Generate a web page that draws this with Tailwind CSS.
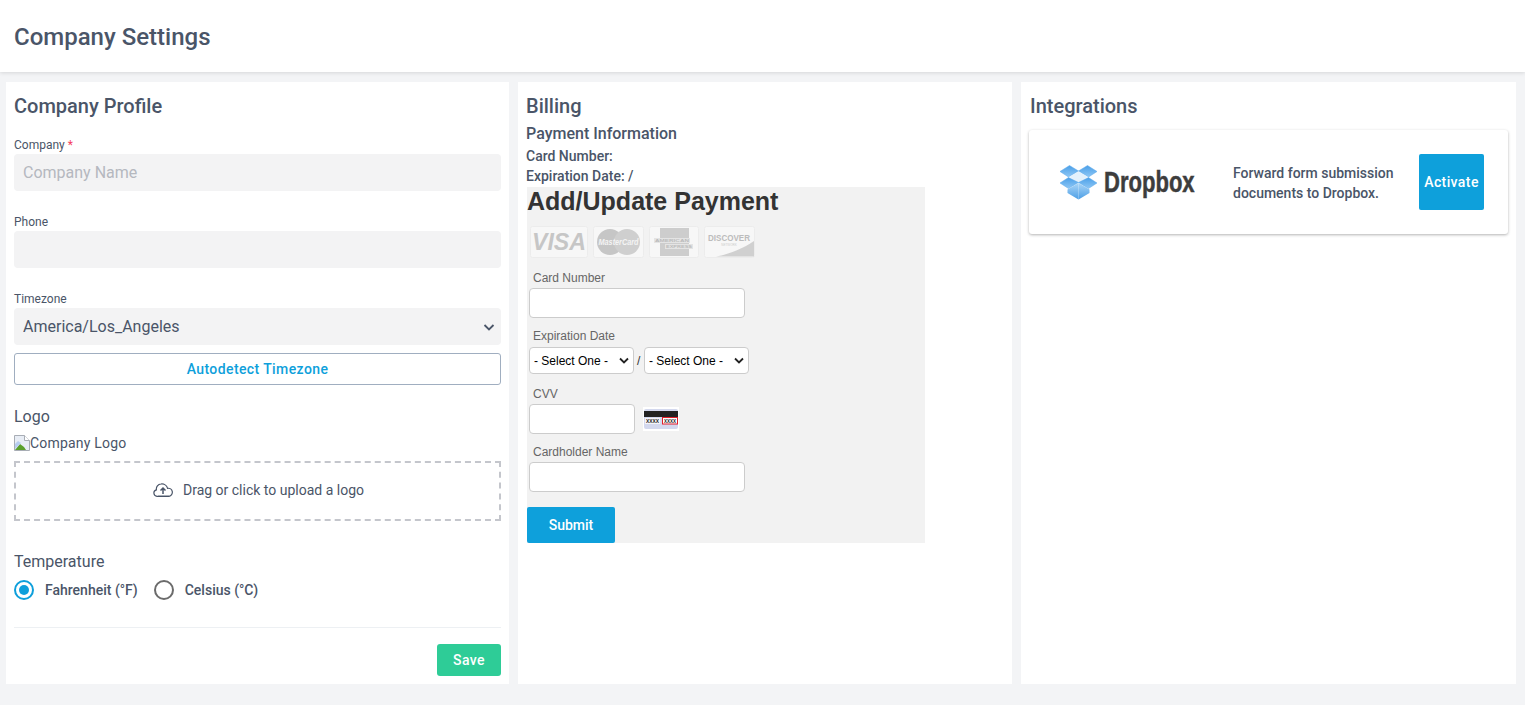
<!DOCTYPE html>
<html lang="en">
<head>
  <meta charset="UTF-8" />
  <title>Company Settings</title>
  <script src="https://cdn.jsdelivr.net/npm/@tailwindcss/browser@4"></script>
</head>
<body class="bg-[#f3f4f6] h-[705px] overflow-hidden font-['Roboto',sans-serif] text-[#4a5568]">
  <header class="bg-white h-[72px] px-[14px] pt-[2px] flex items-center shadow-[0_1px_4px_rgba(0,0,0,0.12)] relative">
    <h1 class="text-2xl font-medium">Company Settings</h1>
  </header>

  <main class="flex gap-[9px] pl-[6px] pt-[10px]">
    <!-- company profile -->
    <section class="bg-white w-[503px] h-[602px] pl-2 pr-2 pt-[11px]">
      <h2 class="text-xl leading-[26px] font-medium">Company Profile</h2>
      <form>
        <label class="block text-xs leading-[14px] mt-[19px] mb-[2px]">Company <span class="text-[#f43f5e]">*</span></label>
        <input type="text" placeholder="Company Name" class="block w-full h-[37px] px-[9px] rounded bg-[#f3f3f4] text-base placeholder:text-[#b5b8bf]" />
        <label class="block text-xs leading-[14px] mt-[24px] mb-[2px]">Phone</label>
        <input type="text" class="block w-full h-[37px] px-[9px] rounded bg-[#f3f3f4] text-base" />
        <label class="block text-xs leading-[14px] mt-[24px] mb-[2px]">Timezone</label>
        <div class="relative">
          <select class="block w-full h-[37px] px-[9px] rounded bg-[#f3f3f4] text-base appearance-none">
            <option>America/Los_Angeles</option>
          </select>
          <svg class="absolute right-[6px] top-[13px] w-3 h-3" viewBox="0 0 12 12" fill="none" stroke="#4a5568" stroke-width="1.8"><path d="M1.5 4l4.5 4.5L10.5 4" /></svg>
        </div>
        <button type="button" class="block w-full h-8 mt-2 rounded-[3px] border border-[#a0aec0] text-[#0e9fdb] text-sm font-medium tracking-[0.4px]">Autodetect Timezone</button>

        <div class="text-base leading-5 mt-[22px]">Logo</div>
        <div class="flex items-center h-4 mt-[8px] text-sm tracking-[0.2px]">
          <svg class="w-4 h-4 shrink-0" viewBox="0 0 16 16"><path d="M0.5 0.5h10l5 5v10H0.5z" fill="#e8edf5" stroke="#a8adb5" /><path d="M10.5 0.5v5h5" fill="#fff" stroke="#a8adb5" /><path d="M1 15l5-6 4 3 2 3z" fill="#5aa02c" /><path d="M1 9l3-3 3 2-6 6z" fill="#b7cdf0" /></svg>
          <span>Company Logo</span>
        </div>
        <div class="flex items-center justify-center gap-[10px] h-[60px] mt-[10px] pl-[2px] pb-[2px] border-2 border-dashed border-[#c4c6cc] text-sm">
          <svg class="w-5 h-[14px]" viewBox="0 0 20 14" fill="none" stroke="#4a5568" stroke-width="1.2"><path d="M5 13.3H4a3.3 3.3 0 0 1-.6-6.5A5 5 0 0 1 8 1a6 6 0 0 1 6.6 4.3 4 4 0 0 1 1.4 8z" /><path d="M5 13.3h11" /><path d="M10 11V5M7.500 7.500L10 5l2.500 2.500" stroke-width="1.500" /></svg>
          <span>Drag or click to upload a logo</span>
        </div>

        <div class="text-base leading-5 mt-[31px]">Temperature</div>
        <div class="flex items-center h-5 mt-[8px] text-sm font-medium">
          <span class="w-5 h-5 rounded-full border-2 border-[#0e9fdb] flex items-center justify-center"><span class="w-[10px] h-[10px] rounded-full bg-[#0e9fdb]"></span></span>
          <span class="ml-[11px]">Fahrenheit (°F)</span>
          <span class="w-5 h-5 rounded-full border-2 border-[#6b6b6b] ml-[16px]"></span>
          <span class="ml-[11px]">Celsius (°C)</span>
        </div>
        <div class="border-t border-[#edf0f3] mt-[27px] pt-4 flex justify-end">
          <button type="button" class="w-16 h-8 rounded-[3px] bg-[#2ecc97] text-white text-sm font-medium tracking-[0.4px]">Save</button>
        </div>
      </form>
    </section>

    <!-- billing -->
    <section class="bg-white w-[494px] h-[602px] pl-2 pt-[11px]">
      <h2 class="text-xl leading-[26px] font-medium">Billing</h2>
      <h3 class="text-base leading-5 font-medium mt-[5px]">Payment Information</h3>
      <p class="text-sm leading-5 font-medium mt-[2px]">Card Number:</p>
      <p class="text-sm leading-5 font-medium">Expiration Date: /</p>
      <div class="bg-[#f2f2f2] w-[398px] h-[356px] ml-px mt-px font-['Liberation_Sans',sans-serif] text-[#666]">
        <div class="text-[25px] leading-7 font-bold text-[#333]">Add/Update Payment</div>
        <div class="flex gap-[5px] ml-[3px] mt-[11px] h-8">
          <svg class="w-[58px] h-8" viewBox="0 0 58 32"><rect x=".5" y=".5" width="57" height="31" rx="2" fill="#f7f7f7" stroke="#ececec" /><text x="29" y="24" text-anchor="middle" font-family="Liberation Sans" font-size="23" font-weight="700" font-style="italic" fill="#c6c6c6" textLength="54" lengthAdjust="spacingAndGlyphs">VISA</text></svg>
          <svg class="w-[51px] h-8" viewBox="0 0 51 32"><rect x=".5" y=".5" width="50" height="31" rx="2" fill="#f7f7f7" stroke="#ececec" /><circle cx="17" cy="16" r="13" fill="#c6c6c6" /><circle cx="34" cy="16" r="13" fill="#cfcfcf" /><text x="25.500" y="19" text-anchor="middle" font-family="Liberation Sans" font-size="8.500" font-weight="700" font-style="italic" fill="#f4f4f4" textLength="40" lengthAdjust="spacingAndGlyphs">MasterCard</text></svg>
          <svg class="w-[50px] h-8" viewBox="0 0 50 32"><rect x=".5" y=".5" width="49" height="31" rx="2" fill="#f7f7f7" stroke="#ececec" /><rect x="11" y="2" width="29" height="28" fill="#cdcdcd" /><rect x="5" y="12" width="36" height="5" fill="#e4e4e4" /><rect x="16" y="18" width="28" height="5" fill="#e4e4e4" /><text x="23" y="16" text-anchor="middle" font-family="Liberation Sans" font-size="4" font-weight="700" fill="#bbb" textLength="34" lengthAdjust="spacingAndGlyphs">AMERICAN</text><text x="30" y="22" text-anchor="middle" font-family="Liberation Sans" font-size="4" font-weight="700" fill="#bbb" textLength="26" lengthAdjust="spacingAndGlyphs">EXPRESS</text></svg>
          <svg class="w-[51px] h-8" viewBox="0 0 51 32"><rect x=".5" y=".5" width="50" height="31" rx="2" fill="#f7f7f7" stroke="#ececec" /><path d="M12 30.500C26 28 38 23 50 15v15.500z" fill="#d0d0d0" /><text x="25" y="15" text-anchor="middle" font-family="Liberation Sans" font-size="9" font-weight="700" fill="#bcbcbc" textLength="42" lengthAdjust="spacingAndGlyphs">DISCOVER</text><text x="25" y="20" text-anchor="middle" font-family="Liberation Sans" font-size="3" fill="#ccc">NETWORK</text></svg>
        </div>
        <label class="block text-xs leading-[14px] ml-[6px] mt-[13px]">Card Number</label>
        <input type="text" class="block w-[216px] h-[30px] ml-[2px] mt-[3px] rounded bg-white border border-[#ccc]" />
        <label class="block text-xs leading-[14px] ml-[6px] mt-[11px]">Expiration Date</label>
        <div class="flex items-center ml-[2px] mt-[4px] text-black">
          <div class="relative">
            <select class="block w-[105px] h-[27px] pl-[4px] rounded bg-white border border-[#ccc] text-xs appearance-none"><option>- Select One -</option></select>
            <svg class="absolute right-[5px] top-[10px] w-[10px] h-2" viewBox="0 0 10 8" fill="none" stroke="#222" stroke-width="1.800"><path d="M1 1.500l4 4 4-4" /></svg>
          </div>
          <span class="w-[4px] mx-[3px] text-xs text-[#333]">/</span>
          <div class="relative">
            <select class="block w-[105px] h-[27px] pl-[4px] rounded bg-white border border-[#ccc] text-xs appearance-none"><option>- Select One -</option></select>
            <svg class="absolute right-[5px] top-[10px] w-[10px] h-2" viewBox="0 0 10 8" fill="none" stroke="#222" stroke-width="1.800"><path d="M1 1.500l4 4 4-4" /></svg>
          </div>
        </div>
        <label class="block text-xs leading-[14px] ml-[6px] mt-[13px]">CVV</label>
        <div class="flex items-center ml-[2px] mt-[3px] gap-2">
          <input type="text" class="block w-[106px] h-[30px] rounded bg-white border border-[#ccc]" />
          <svg class="w-[36px] h-[24px]" viewBox="0 0 36 24"><rect width="36" height="24" fill="#fff" /><rect x="1" y="2" width="34" height="20" rx="2" fill="#d3d8ee" /><rect x="1" y="4" width="34" height="6" fill="#222" /><rect x="2" y="11" width="15" height="6" fill="#f4f4f8" /><rect x="19.500" y="10.500" width="15" height="6.500" fill="#fff" stroke="#e11d2a" /><text x="9.500" y="16" text-anchor="middle" font-family="Liberation Sans" font-size="6" font-weight="700" fill="#222" textLength="13" lengthAdjust="spacingAndGlyphs">XXXX</text><text x="27" y="16" text-anchor="middle" font-family="Liberation Sans" font-size="6" font-weight="700" fill="#222" textLength="12" lengthAdjust="spacingAndGlyphs">XXXX</text></svg>
        </div>
        <label class="block text-xs leading-[14px] ml-[6px] mt-[11px]">Cardholder Name</label>
        <input type="text" class="block w-[216px] h-[30px] ml-[2px] mt-[3px] rounded bg-white border border-[#ccc]" />
        <button type="button" class="block w-[88px] h-9 mt-[15px] rounded-[2px] bg-[#0ea0db] text-white text-sm font-medium font-['Roboto',sans-serif]">Submit</button>
      </div>
    </section>

    <!-- integrations -->
    <section class="bg-white w-[495px] h-[602px] pl-2 pr-2 pt-[11px]">
      <h2 class="text-xl leading-[26px] font-medium ml-px">Integrations</h2>
      <div class="flex items-center h-[104px] mt-[11px] rounded-[3px] shadow-[0_1px_3px_rgba(0,0,0,0.3)]">
        <div class="flex items-center ml-[30px] w-[174px] shrink-0">
          <svg class="w-[39px] h-[35px] shrink-0" viewBox="0 0 38 35">
            <defs>
              <linearGradient id="flap" x1="0" y1="0" x2="0" y2="1"><stop offset="0" stop-color="#4a9fe8" /><stop offset="1" stop-color="#8ec7f5" /></linearGradient>
              <linearGradient id="front" x1="0" y1="0" x2="0" y2="1"><stop offset="0" stop-color="#a9d5f7" /><stop offset="1" stop-color="#4d9fe6" /></linearGradient>
            </defs>
            <path d="M10 .5L19 6 9 12 .5 6.500z" fill="url(#flap)" stroke="#5aa9ea" stroke-width=".5" />
            <path d="M28 .5L19 6l10 6 8.500-5.500z" fill="url(#flap)" stroke="#5aa9ea" stroke-width=".5" />
            <path d="M19 6.500l9.500 5.500L19 17.500 9.500 12z" fill="#e3f1fc" />
            <path d="M9 12.500L.5 18 9 23.500l10-6z" fill="url(#flap)" stroke="#5aa9ea" stroke-width=".5" />
            <path d="M29 12.500l8.500 5.500-8.500 5.500-10-6z" fill="url(#flap)" stroke="#5aa9ea" stroke-width=".5" />
            <path d="M8 24.500l11-6.500v16.500L8 28z" fill="url(#front)" />
            <path d="M30 24.500L19 18v16.500L30 28z" fill="url(#front)" />
          </svg>
          <span class="font-['Liberation_Sans',sans-serif] font-bold text-[29px] leading-8 text-[#3d3d3d] origin-left scale-x-[0.76] ml-[6px] [-webkit-text-stroke:0.5px_#3d3d3d]">Dropbox</span>
        </div>
        <p class="w-[176px] pt-[1px] text-sm leading-5 font-medium">Forward form submission documents to Dropbox.</p>
        <button type="button" class="w-[65px] h-14 ml-[10px] rounded-[2px] bg-[#0ea0db] text-white text-sm font-medium tracking-[0.4px]">Activate</button>
      </div>
    </section>
  </main>
</body>
</html>
